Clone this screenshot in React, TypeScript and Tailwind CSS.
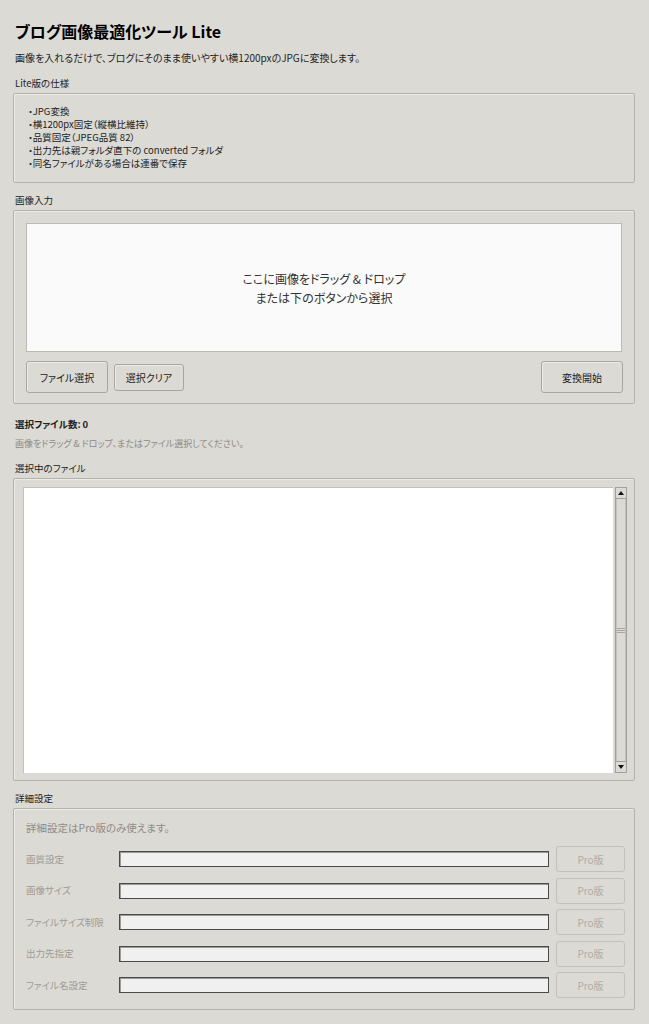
import type { ReactNode } from 'react';

const jp =
  "font-['Noto_Sans_CJK_JP','Noto_Sans',sans-serif] [font-feature-settings:'palt']";

const specs = [
  '・JPG変換',
  '・横1200px固定（縦横比維持）',
  '・品質固定（JPEG品質 82）',
  '・出力先は親フォルダ直下の converted フォルダ',
  '・同名ファイルがある場合は連番で保存'
];

const settings = ['画質設定', '画像サイズ', 'ファイルサイズ制限', '出力先指定', 'ファイル名設定'];

function Frame({ className, children }: { className?: string; children: ReactNode }) {
  return (
    <div
      className={`border border-[#b4b1aa] rounded-[2px] shadow-[inset_1px_1px_0_#ecebe7] ${className ?? ''}`}
    >
      {children}
    </div>
  );
}

function Label({ children, className }: { children: ReactNode; className?: string }) {
  return (
    <div className={`flex items-center pl-[2px] text-[9.5px] text-[#222] ${className ?? ''}`}>
      {children}
    </div>
  );
}

function Button({ children, className }: { children: ReactNode; className?: string }) {
  return (
    <button
      className={`flex items-center justify-center rounded-[3px] border border-[#a9a69f] bg-[#dcdad5] text-[10px] text-[#222] shadow-[inset_1px_1px_0_#eeece8] ${className ?? ''}`}
    >
      {children}
    </button>
  );
}

export default function App() {
  return (
    <div
      className={`w-[649px] h-[1024px] overflow-hidden bg-[#dcdad5] pl-[13px] pr-[14px] pt-[16px] text-[#1c1c1c] ${jp}`}
    >
      <h1 className="flex h-[30px] items-center pl-[2px] text-[16px] font-bold text-black">
        ブログ画像最適化ツール Lite
      </h1>
      <p className="flex h-[22px] items-center pl-[2px] text-[10px] text-[#1e1e1e]">
        画像を入れるだけで、ブログにそのまま使いやすい横1200pxのJPGに変換します。
      </p>

      {/* Lite spec */}
      <Label className="mt-[6px] h-[19px]">Lite版の仕様</Label>
      <Frame className="h-[90px] pl-[14px] pt-[11px]">
        {specs.map((s) => (
          <div key={s} className="text-[9.5px] leading-[13px] text-[#222]">
            {s}
          </div>
        ))}
      </Frame>

      {/* Image input */}
      <Label className="mt-[8px] h-[19px]">画像入力</Label>
      <Frame className="h-[194px] px-[12px] pt-[12px]">
        <div className="flex h-[129px] flex-col items-center justify-center border border-[#bdbab3] bg-[#fafafa] text-[12px] leading-[19px] text-[#333]">
          <div>ここに画像をドラッグ &amp; ドロップ</div>
          <div>または下のボタンから選択</div>
        </div>
        <div className="mt-[9px] flex h-[32px] items-center">
          <Button className="h-[32px] w-[82px]">ファイル選択</Button>
          <Button className="ml-[6px] h-[27px] w-[70px]">選択クリア</Button>
          <Button className="ml-auto mr-[-1px] h-[32px] w-[82px]">変換開始</Button>
        </div>
      </Frame>

      <div className="mt-[10px] flex h-[20px] items-center pl-[2px] text-[9.5px] font-semibold text-[#222]">
        選択ファイル数: 0
      </div>
      <div className="flex h-[19px] items-center pl-[2px] text-[9px] text-[#8c8a85]">
        画像をドラッグ &amp; ドロップ、またはファイル選択してください。
      </div>

      {/* File list */}
      <Label className="mt-[5px] h-[20px]">選択中のファイル</Label>
      <Frame className="flex h-[303px] pl-[9px] pr-[7px] pt-[8px] pb-[7px]">
        <div className="flex-1 border-l border-t border-[#c3c0b9] bg-white" />
        <div className="ml-[2px] flex w-[12px] flex-col border border-[#a3a098] bg-[#dcdad5]">
          <div className="flex h-[11px] items-center justify-center border-b border-[#a3a098]">
            <svg width="6" height="4" viewBox="0 0 6 4">
              <path d="M0 4 L3 0 L6 4 Z" fill="#111" />
            </svg>
          </div>
          <div className="flex flex-1 flex-col items-center justify-center gap-[1px] border-x border-[#c4c1ba]">
            <div className="h-[1px] w-[8px] bg-[#a8a59e]" />
            <div className="h-[1px] w-[8px] bg-[#a8a59e]" />
            <div className="h-[1px] w-[8px] bg-[#a8a59e]" />
          </div>
          <div className="flex h-[11px] items-center justify-center border-t border-[#a3a098]">
            <svg width="6" height="4" viewBox="0 0 6 4">
              <path d="M0 0 L6 0 L3 4 Z" fill="#111" />
            </svg>
          </div>
        </div>
      </Frame>

      {/* Advanced settings */}
      <Label className="mt-[7px] h-[20px]">詳細設定</Label>
      <Frame className="h-[202px] pl-[12px] pr-[9px] pt-[9px]">
        <div className="flex h-[20px] items-center text-[10.5px] text-[#8e8c87]">
          詳細設定はPro版のみ使えます。
        </div>
        <div className="mt-[8px] flex flex-col gap-[5.5px]">
          {settings.map((name) => (
            <div key={name} className="flex h-[26px] items-center">
              <div className="w-[93px] text-[9.5px] text-[#9c9a95]">{name}</div>
              <div className="h-[16px] flex-1 border border-[#4a4a4a] bg-[#f0f0f0] shadow-[inset_1px_1px_0_#9a9a9a]" />
              <div className="ml-[7px] flex h-[26px] w-[69px] items-center justify-center rounded-[3px] border border-[#c3c0b9] text-[10px] text-[#aeaca7]">
                Pro版
              </div>
            </div>
          ))}
        </div>
      </Frame>
    </div>
  );
}
